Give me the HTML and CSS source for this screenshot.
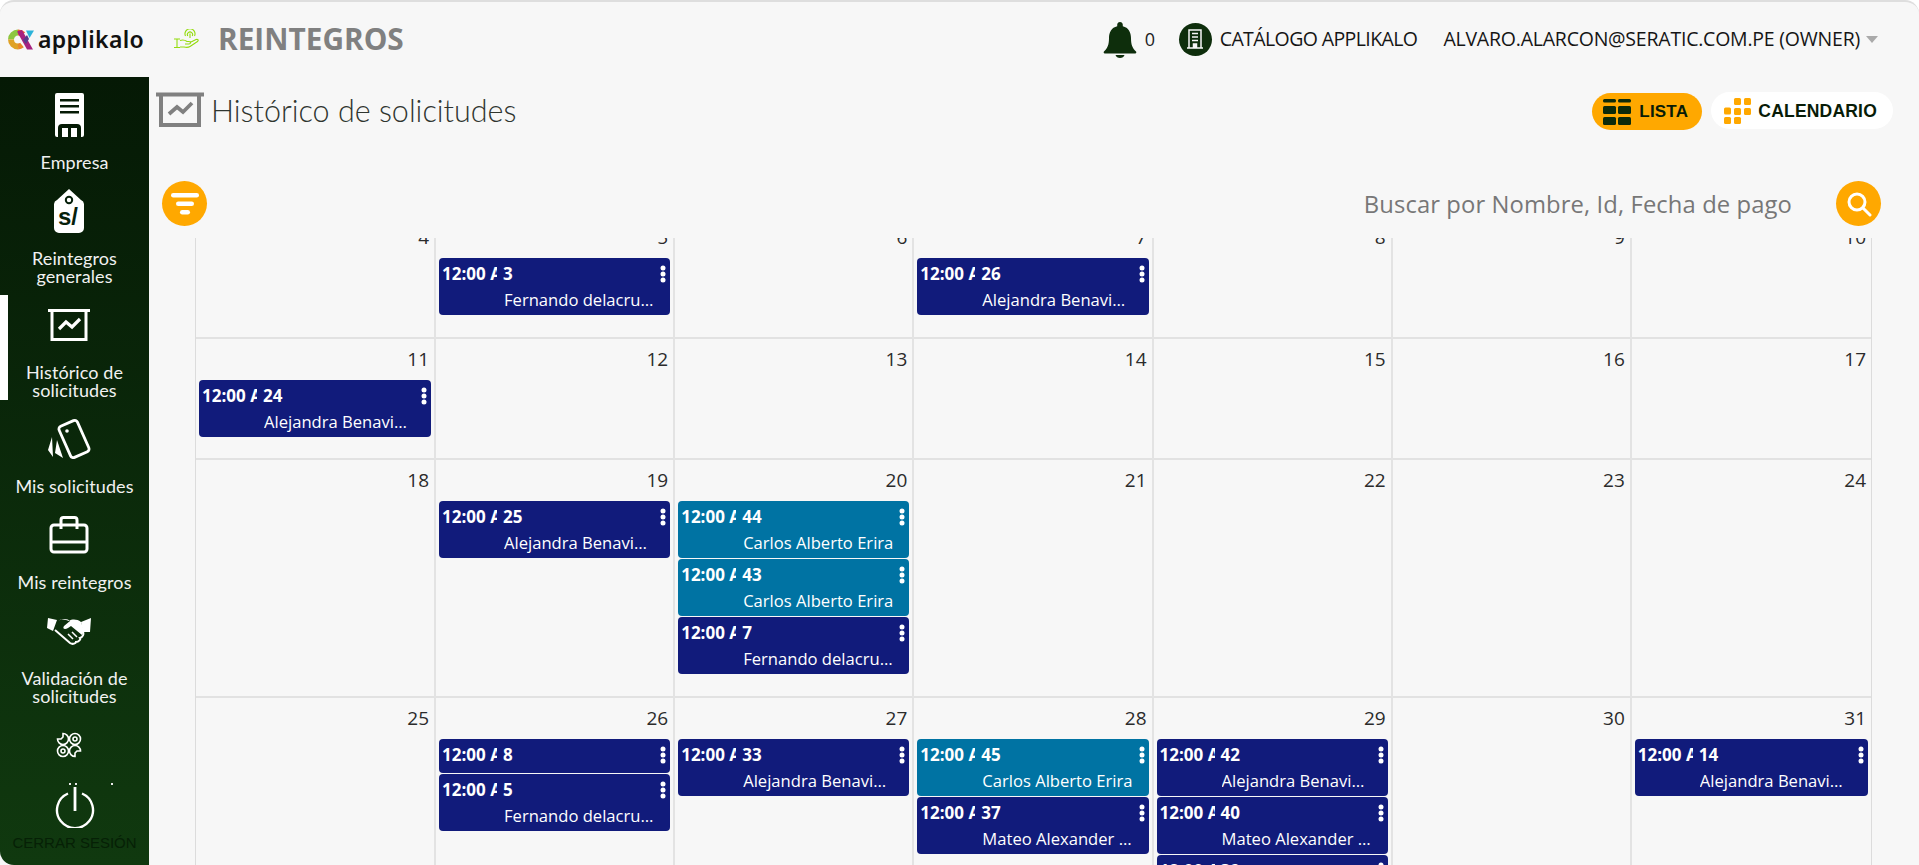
FILE: index.html
```html
<!DOCTYPE html>
<html lang="es">
<head>
<meta charset="utf-8">
<title>Reintegros</title>
<link rel="stylesheet" href="styles.css">
</head>
<body>
<svg class="defs" width="0" height="0" aria-hidden="true"><defs>
<symbol id="kebab" viewBox="0 0 6 18"><circle cx="3" cy="3" r="2.500"/><circle cx="3" cy="9" r="2.500"/><circle cx="3" cy="15" r="2.500"/></symbol>
</defs></svg>
<div class="app">
  <header class="topbar">
    <div class="brand">
      <svg class="logo" viewBox="0 0 26 21" width="26" height="21">
        <path d="M10 3.500A7 7 0 0 0 3 10.500" fill="none" stroke="#8dc63f" stroke-width="6"/>
        <path d="M3 10.500A7 7 0 0 0 10 17.500" fill="none" stroke="#dfa126" stroke-width="6"/>
        <path d="M10 3.500A7 7 0 0 1 15 5.500" fill="none" stroke="#f1592a" stroke-width="6"/>
        <path d="M10 17.500A7 7 0 0 0 14 16" fill="none" stroke="#e8862a" stroke-width="6"/>
        <path d="M9 2.500L14 1L25 20.500H19Z" fill="#a6227f"/>
        <path d="M18 1.500H26L21.500 9Z" fill="#2bb3d9"/>
        <path d="M15 11L19 6L21 10L18 15Z" fill="#5a3a8c"/>
      </svg>
      <span class="brand-name">applikalo</span>
    </div>
    <svg class="hand" viewBox="0 0 26 21" width="26" height="21" fill="none" stroke="#94dc0e" stroke-width="1.100">
      <path d="M1 10H7M1 18.500H7M4 10V18.500"/>
      <path d="M7 11.500C10 10.500 12 11 14 12.500H16C18 12.500 18 15 16 15H12M17 13.500L23 10.500C25 10 26 11.500 24.500 12.500L17 17.500C15 18.800 13 18.500 11 18H7"/>
      <path d="M12.500 7A5 5 0 1 1 21.500 7M14.800 7A2.600 2.600 0 1 1 19.200 7M17 4.500V9"/>
    </svg>
    <h1 class="app-title">REINTEGROS</h1>
    <div class="top-actions">
      <svg class="bell" viewBox="0 0 34 36" width="34" height="36"><path fill="#0e2e0c" d="M17 0c1.600 0 2.800 1.200 2.800 2.800v1.500C25.500 5.600 28 10.500 28 16c0 7 1.500 10 5 13.500.6.700.4 2-.8 2H1.800c-1.200 0-1.400-1.300-.8-2C4.500 26 6 23 6 16c0-5.500 2.500-10.400 8.200-11.700V2.800C14.200 1.200 15.400 0 17 0z"/><path fill="#0e2e0c" d="M12.500 33h9c-.5 2-2.300 3-4.500 3s-4-1-4.500-3z"/></svg>
      <span class="count">0</span>
      <span class="circle-icon">
        <svg viewBox="0 0 18 20" width="18" height="20" fill="none" stroke="#f7f7f7" stroke-width="1.500"><path d="M3 1H15V19H3ZM1 19H17M6 4.500H12M6 8H12M6 11.500H12"/><path d="M7.500 19V15H10.500V19" fill="#f7f7f7"/></svg>
      </span>
      <span class="top-link">CATÁLOGO APPLIKALO</span>
      <span class="top-link user">ALVARO.ALARCON@SERATIC.COM.PE (OWNER)</span>
      <span class="caret"></span>
    </div>
  </header>

  <div class="body-row">
    <nav class="sidebar">
      <a class="nav-item">
        <span class="nav-icon"><svg viewBox="0 0 29 44" width="29" height="44"><path fill="#fff" fill-rule="evenodd" d="M2 0H27A2 2 0 0 1 29 2V42A2 2 0 0 1 27 44H26V35A4 4 0 0 0 22 31H7A4 4 0 0 0 3 35V44H2A2 2 0 0 1 0 42V2A2 2 0 0 1 2 0ZM5 6V8.500H24V6ZM5 12V14.500H24V12ZM5 18V20.500H24V18Z"/><path fill="#fff" d="M7 35H13V44H7ZM16 35H22V44H16Z"/></svg></span>
        <span class="nav-label">Empresa</span>
      </a>
      <a class="nav-item">
        <span class="nav-icon"><svg viewBox="0 0 30 44" width="30" height="44"><path fill="#fff" d="M15 0L27 11A5 5 0 0 1 30 16V39A5 5 0 0 1 25 44H5A5 5 0 0 1 0 39V16A5 5 0 0 1 3 11Z"/><circle cx="15" cy="11" r="3.200" fill="none" stroke="#06200a" stroke-width="2"/><text x="14" y="36" class="tag-text">s/</text></svg></span>
        <span class="nav-label">Reintegros<br>generales</span>
      </a>
      <a class="nav-item active">
        <span class="nav-icon"><svg viewBox="0 0 42 32" width="42" height="32" fill="none" stroke="#fff"><path stroke-width="3" d="M0 1.500H42"/><path stroke-width="3" d="M4 2V30.500H38V2"/><path stroke-width="3.200" d="M11 20L18 13L24 18L32 10"/></svg></span>
        <span class="nav-label">Histórico de<br>solicitudes</span>
      </a>
      <a class="nav-item">
        <span class="nav-icon"><svg viewBox="0 0 44 42" width="44" height="42"><rect x="17" y="4" width="20" height="34" rx="3" transform="rotate(-24 27 21)" fill="none" stroke="#fff" stroke-width="2.800"/><circle cx="20" cy="13" r="1.800" fill="#fff"/><path fill="#fff" d="M5 19L1 32L6 39ZM10 22L8 35L16 40Z"/></svg></span>
        <span class="nav-label">Mis solicitudes</span>
      </a>
      <a class="nav-item">
        <span class="nav-icon"><svg viewBox="0 0 40 38" width="40" height="38" fill="none" stroke="#fff" stroke-width="3"><rect x="2" y="9" width="36" height="27" rx="3"/><path d="M12 9V4A2.500 2.500 0 0 1 14.500 1.500H25.500A2.500 2.500 0 0 1 28 4V9M2 26H38M12 9V13M28 9V13"/></svg></span>
        <span class="nav-label">Mis reintegros</span>
      </a>
      <a class="nav-item">
        <span class="nav-icon"><svg viewBox="0 0 44 28" width="44" height="28"><path fill="#fff" d="M1 1L10 3L6 14L0 11ZM44 1L43 15L36 15L34 5Z"/><path fill="none" stroke="#fff" stroke-width="2" d="M8 13L23 26C26 28 29 26 29 25C32 25 34 22 33 21C36 20 37 17 36 15"/><path fill="#fff" d="M11 4C16 1 21 2 23 4L17 9C15 12 18 13 21 11L24 9L35 18L37 14L34 5C30 2 25 2 22 4C18 2 14 2 11 4Z"/><path stroke="#fff" stroke-width="1.500" d="M21 17L26 22M25 15L30 20"/></svg></span>
        <span class="nav-label">Validación de<br>solicitudes</span>
      </a>
      <a class="nav-item tools">
        <span class="nav-icon"><svg viewBox="0 0 26 26" width="26" height="26" fill="none" stroke="#fff" stroke-width="1.600"><path d="M7 1.500V5L5 7H1.500A5.500 5.500 0 1 0 7 1.500ZM19 24.500V21L21 19H24.500A5.500 5.500 0 1 0 19 24.500Z"/><circle cx="19" cy="7" r="5.500"/><circle cx="7" cy="19" r="5.500"/><circle cx="19" cy="7" r="2"/><circle cx="7" cy="19" r="2"/></svg></span>
        <span class="clip-dots"><i></i><i></i><i></i></span>
      </a>
      <a class="nav-item logout">
        <svg viewBox="0 0 40 41" width="40" height="41" fill="none" stroke="#fff" stroke-width="2.400"><path d="M13 6.500A18 18 0 1 0 27 6.500"/><path stroke-width="2.800" d="M20 0V24"/></svg>
        <span class="logout-label">CERRAR SESIÓN</span>
      </a>
    </nav>

    <main class="content">
      <div class="title-row">
        <div class="page-title">
          <svg viewBox="0 0 48 36" width="48" height="36" fill="none" stroke="#808080"><path stroke-width="4" d="M0 2.500H48"/><path stroke-width="4" d="M5 3V33H43V3"/><path stroke-width="3.800" d="M13 22L21 15L27 20L36 11"/></svg>
          <h2>Histórico de solicitudes</h2>
        </div>
        <div class="view-switch">
          <button class="pill pill-on">
            <svg viewBox="0 0 28 26" width="28" height="26" fill="#0c2a0a"><rect x="0" y="0" width="13" height="3.500" rx="1.500"/><rect x="15" y="0" width="13" height="3.500" rx="1.500"/><rect x="0" y="7" width="13" height="8" rx="1.500"/><rect x="15" y="7" width="13" height="8" rx="1.500"/><rect x="0" y="18" width="13" height="8" rx="1.500"/><rect x="15" y="18" width="13" height="8" rx="1.500"/></svg>
            LISTA
          </button>
          <button class="pill">
            <svg viewBox="0 0 27 26" width="27" height="26" fill="#ffa800"><rect x="10" y="0" width="7" height="7" rx="1.500"/><rect x="20" y="0" width="7" height="7" rx="1.500"/><rect x="0" y="9.500" width="7" height="7" rx="1.500"/><rect x="10" y="10" width="7" height="7" rx="1.500"/><rect x="20" y="10" width="7" height="7" rx="1.500"/><rect x="0" y="19" width="7" height="7" rx="1.500"/><rect x="10" y="19" width="7" height="7" rx="1.500"/></svg>
            CALENDARIO
          </button>
        </div>
      </div>
      <div class="filter-row">
        <button class="round-btn">
          <svg viewBox="0 0 28 22" width="28" height="22" fill="#fff"><rect x="0" y="0" width="28" height="4.500" rx="2.250"/><rect x="5" y="8.500" width="18" height="4.500" rx="2.250"/><rect x="9" y="17" width="10" height="4.500" rx="2.250"/></svg>
        </button>
        <div class="search">
          <span class="search-text">Buscar por Nombre, Id, Fecha de pago</span>
          <button class="round-btn">
            <svg viewBox="0 0 26 26" width="26" height="26" fill="none" stroke="#fff" stroke-width="3"><circle cx="11" cy="11" r="8"/><path d="M17 17L24 24" stroke-linecap="round"/></svg>
          </button>
        </div>
      </div>

      <div class="cal-view">
        <div class="cal-grid">
          <div class="cell r1"><span class="day">4</span></div>
          <div class="cell r1"><span class="day">5</span>
            <div class="ev"><div class="ev-top"><span class="ev-time">12:00 AM</span><b>3</b><svg class="kebab"><use href="#kebab"/></svg></div><div class="ev-name">Fernando delacruz Garcia</div></div>
          </div>
          <div class="cell r1"><span class="day">6</span></div>
          <div class="cell r1"><span class="day">7</span>
            <div class="ev"><div class="ev-top"><span class="ev-time">12:00 AM</span><b>26</b><svg class="kebab"><use href="#kebab"/></svg></div><div class="ev-name">Alejandra Benavides Ruiz</div></div>
          </div>
          <div class="cell r1"><span class="day">8</span></div>
          <div class="cell r1"><span class="day">9</span></div>
          <div class="cell r1"><span class="day">10</span></div>

          <div class="cell r2"><span class="day">11</span>
            <div class="ev"><div class="ev-top"><span class="ev-time">12:00 AM</span><b>24</b><svg class="kebab"><use href="#kebab"/></svg></div><div class="ev-name">Alejandra Benavides Ruiz</div></div>
          </div>
          <div class="cell r2"><span class="day">12</span></div>
          <div class="cell r2"><span class="day">13</span></div>
          <div class="cell r2"><span class="day">14</span></div>
          <div class="cell r2"><span class="day">15</span></div>
          <div class="cell r2"><span class="day">16</span></div>
          <div class="cell r2"><span class="day">17</span></div>

          <div class="cell r3"><span class="day">18</span></div>
          <div class="cell r3"><span class="day">19</span>
            <div class="ev"><div class="ev-top"><span class="ev-time">12:00 AM</span><b>25</b><svg class="kebab"><use href="#kebab"/></svg></div><div class="ev-name">Alejandra Benavides Ruiz</div></div>
          </div>
          <div class="cell r3"><span class="day">20</span>
            <div class="ev teal"><div class="ev-top"><span class="ev-time">12:00 AM</span><b>44</b><svg class="kebab"><use href="#kebab"/></svg></div><div class="ev-name">Carlos Alberto Erira</div></div>
            <div class="ev teal"><div class="ev-top"><span class="ev-time">12:00 AM</span><b>43</b><svg class="kebab"><use href="#kebab"/></svg></div><div class="ev-name">Carlos Alberto Erira</div></div>
            <div class="ev"><div class="ev-top"><span class="ev-time">12:00 AM</span><b>7</b><svg class="kebab"><use href="#kebab"/></svg></div><div class="ev-name">Fernando delacruz Garcia</div></div>
          </div>
          <div class="cell r3"><span class="day">21</span></div>
          <div class="cell r3"><span class="day">22</span></div>
          <div class="cell r3"><span class="day">23</span></div>
          <div class="cell r3"><span class="day">24</span></div>

          <div class="cell r4"><span class="day">25</span></div>
          <div class="cell r4"><span class="day">26</span>
            <div class="ev"><div class="ev-top"><span class="ev-time">12:00 AM</span><b>8</b><svg class="kebab"><use href="#kebab"/></svg></div></div>
            <div class="ev"><div class="ev-top"><span class="ev-time">12:00 AM</span><b>5</b><svg class="kebab"><use href="#kebab"/></svg></div><div class="ev-name">Fernando delacruz Garcia</div></div>
          </div>
          <div class="cell r4"><span class="day">27</span>
            <div class="ev"><div class="ev-top"><span class="ev-time">12:00 AM</span><b>33</b><svg class="kebab"><use href="#kebab"/></svg></div><div class="ev-name">Alejandra Benavides Ruiz</div></div>
          </div>
          <div class="cell r4"><span class="day">28</span>
            <div class="ev teal"><div class="ev-top"><span class="ev-time">12:00 AM</span><b>45</b><svg class="kebab"><use href="#kebab"/></svg></div><div class="ev-name">Carlos Alberto Erira</div></div>
            <div class="ev"><div class="ev-top"><span class="ev-time">12:00 AM</span><b>37</b><svg class="kebab"><use href="#kebab"/></svg></div><div class="ev-name">Mateo Alexander Rojas Diaz</div></div>
          </div>
          <div class="cell r4"><span class="day">29</span>
            <div class="ev"><div class="ev-top"><span class="ev-time">12:00 AM</span><b>42</b><svg class="kebab"><use href="#kebab"/></svg></div><div class="ev-name">Alejandra Benavides Ruiz</div></div>
            <div class="ev"><div class="ev-top"><span class="ev-time">12:00 AM</span><b>40</b><svg class="kebab"><use href="#kebab"/></svg></div><div class="ev-name">Mateo Alexander Rojas Diaz</div></div>
            <div class="ev"><div class="ev-top"><span class="ev-time">12:00 AM</span><b>39</b><svg class="kebab"><use href="#kebab"/></svg></div><div class="ev-name">Mateo Alexander Rojas Diaz</div></div>
          </div>
          <div class="cell r4"><span class="day">30</span></div>
          <div class="cell r4"><span class="day">31</span>
            <div class="ev"><div class="ev-top"><span class="ev-time">12:00 AM</span><b>14</b><svg class="kebab"><use href="#kebab"/></svg></div><div class="ev-name">Alejandra Benavides Ruiz</div></div>
          </div>
        </div>
      </div>
    </main>
  </div>
</div>
</body>
</html>
```
FILE: styles.css
```css
* { box-sizing: border-box; }
html, body { margin: 0; height: 100%; background: #fff; overflow: hidden; }
body { font-family: "Open Sans", "Liberation Sans", sans-serif; color: #1d1d1d; }
.defs { display: block; height: 0; }
button { border: 0; padding: 0; font: inherit; cursor: pointer; }

.app {
  height: 865px;
  display: flex;
  flex-direction: column;
  background: #f7f7f7;
  border-top: 2px solid #dedede;
  border-radius: 14px 14px 0 0;
  overflow: hidden;
}

/* Top bar */
.topbar { height: 75px; flex: none; display: flex; align-items: center; padding: 0 41px 1px 8px; }
.brand { display: flex; align-items: center; gap: 4px; width: 165px; }
.logo { flex: none; }
.brand-name { font-family: "Noto Sans", sans-serif; font-weight: 600; font-size: 23px; color: #111; letter-spacing: .35px; line-height: 26px; }
.hand { flex: none; }
.app-title { margin: 0 0 0 19px; font-size: 29.800px; line-height: 36px; font-weight: 700; color: #808080; }
.top-actions { margin-left: auto; display: flex; align-items: center; }
.bell { flex: none; margin-top: 2px; }
.count { margin-left: 8px; font-size: 18px; width: 34px; }
.circle-icon { width: 33px; height: 33px; border-radius: 50%; background: #0e2e0c; display: flex; align-items: center; justify-content: center; margin-right: 8px; }
.top-link { font-size: 19.500px; color: #151515; letter-spacing: -.6px; line-height: 26px; white-space: nowrap; }
.user { margin-left: 26px; letter-spacing: -.22px; }
.caret { margin-left: 6px; width: 0; height: 0; border-left: 6px solid transparent; border-right: 6px solid transparent; border-top: 7px solid #aaa; }

/* Layout */
.body-row { flex: 1; min-height: 0; display: flex; }

/* Sidebar */
.sidebar {
  width: 149px;
  flex: none;
  padding-top: 8px;
  display: flex;
  flex-direction: column;
  gap: 9px;
  background: linear-gradient(180deg, #051905 0%, #10390f 100%);
  border-radius: 0 0 0 14px;
  overflow: hidden;
}
.nav-item { position: relative; display: flex; flex-direction: column; align-items: center; padding: 8px 0 1px; gap: 16px; color: #f1f1f1; }
.nav-icon { height: 44px; display: flex; align-items: center; justify-content: center; margin-right: 11px; }
.nav-label { font-family: "Lato", sans-serif; font-size: 18px; letter-spacing: .1px; line-height: 18px; text-align: center; }
.active::before { content: ""; position: absolute; left: 0; top: 0; bottom: 0; width: 8px; background: #fff; }
.tag-text { font-family: "Liberation Sans", sans-serif; font-weight: 700; font-size: 24px; fill: #06200a; text-anchor: middle; }
.clip-dots { display: flex; gap: 4px; height: 2px; align-self: flex-start; margin-left: 69px; }
.clip-dots i { width: 2px; height: 2px; background: #e9e9e9; display: block; }
.clip-dots i:nth-child(2) { margin-right: 30px; }
.logout { padding: 0; gap: 0; margin-top: -8px; }
.logout-label { font-family: "Liberation Sans", sans-serif; font-size: 15px; line-height: 20px; color: #062006; margin-top: 5px; white-space: nowrap; }

/* Content */
.content { flex: 1; min-width: 0; display: flex; flex-direction: column; padding: 0 26px 0 0; }
.title-row { height: 104px; flex: none; display: flex; justify-content: space-between; align-items: flex-start; padding-top: 15px; padding-left: 7px; }
.page-title { display: flex; align-items: center; gap: 7px; }
.page-title h2 { margin: 0; font-family: "Lato", sans-serif; font-weight: 300; font-size: 30.500px; line-height: 36px; color: #2f352f; }
.view-switch { display: flex; gap: 9px; }
.pill { height: 37px; border-radius: 19px; background: #fff; display: flex; align-items: center; gap: 7px; padding: 1px 16px 0 13px; font-family: "Liberation Sans", sans-serif; font-weight: 700; font-size: 17.500px; letter-spacing: .2px; color: #081c07; }
.pill-on { background: #ffa800; width: 110px; padding: 0 0 0 11px; margin-top: 1px; gap: 8px; font-size: 17px; }

.filter-row { height: 57px; flex: none; display: flex; justify-content: space-between; padding-left: 13px; }
.round-btn { width: 45px; height: 45px; border-radius: 50%; background: #ffa800; display: flex; align-items: center; justify-content: center; flex: none; }
.search { display: flex; align-items: center; height: 45px; gap: 44px; margin-right: 12px; }
.search-text { font-size: 23.800px; color: #777; letter-spacing: .1px; white-space: nowrap; }

.cal-view { flex: 1; min-height: 0; overflow: hidden; margin: 0 21px 0 46px; }
.cal-grid { display: grid; grid-template-columns: 240px repeat(6, 1fr); margin-top: -21px; border-left: 1px solid #dcdcdc; border-right: 1px solid #dcdcdc; }
.cell { border-right: 2px solid #e3e3e3; border-bottom: 2px solid #e2e2e2; display: flex; flex-direction: column; padding: 0 3px; gap: 1px; min-width: 0; }
.cell:nth-child(7n) { border-right: 0; }
.cell:nth-child(7n) .ev-name { margin-right: 8px; }
.r1 { height: 122px; }
.r2 { height: 121px; }
.r3 { height: 238px; }
.r4 { height: 260px; }
.day { height: 40px; line-height: 40px; font-size: 19px; color: #2b2b2b; text-align: right; padding-right: 2px; flex: none; }

.ev { flex: none; position: relative; background: #111b7b; color: #fff; border-radius: 4px; padding: 4px 9px 6px 3px; }
.teal { background: #0073a3; }
.ev-top { display: flex; height: 24px; line-height: 24px; align-items: center; font-size: 17px; font-weight: 700; }
.ev-time { width: 55px; overflow: hidden; white-space: nowrap; flex: none; margin-right: 6px; }
.ev-top b { font-weight: 700; }
.kebab { width: 6px; height: 18px; fill: #fff; margin-left: auto; margin-right: -5px; }
.ev-name { margin: 2px 6px -3px 62px; line-height: 24px; height: 24px; font-size: 16.600px; white-space: nowrap; overflow: hidden; text-overflow: ellipsis; }
```
